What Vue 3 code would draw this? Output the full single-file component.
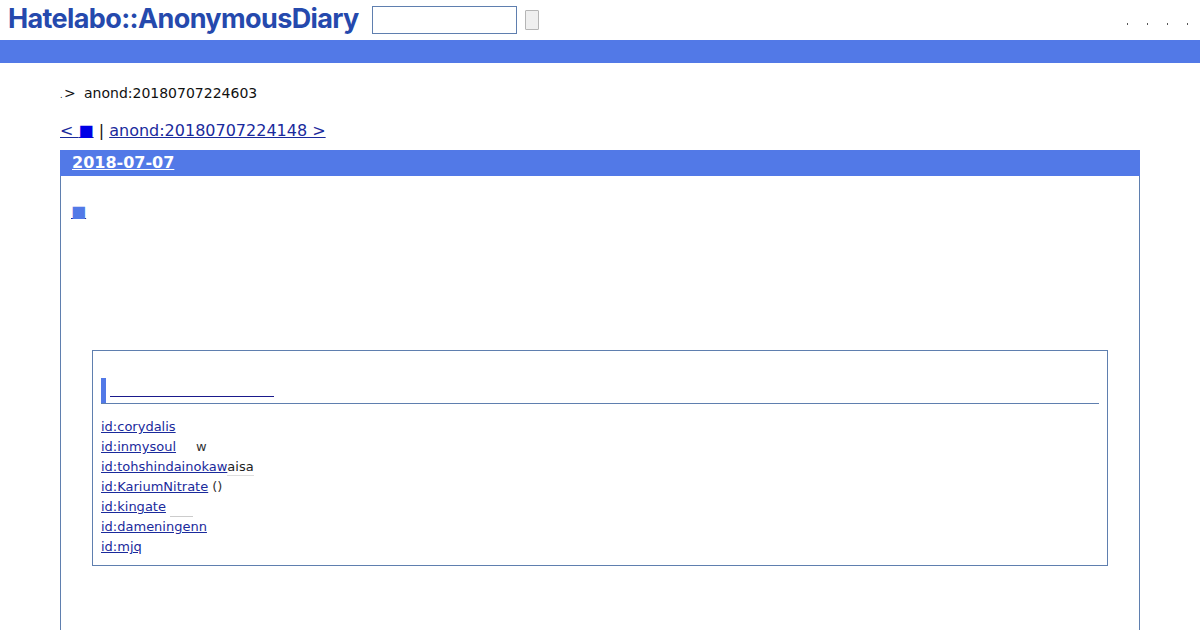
<template>
  <div class="page">
    <header class="top">
      <a class="logo">Hatelabo::AnonymousDiary</a>
      <form class="search" @submit.prevent>
        <input class="search-box" type="text" />
        <button class="search-btn" type="button"></button>
      </form>
      <ul class="top-links">
        <li v-for="n in 4" :key="n"><span class="tick"></span></li>
      </ul>
    </header>
    <div class="band"></div>

    <main class="content">
      <p class="crumb"><span class="dot">.</span><span class="gt">&gt;</span><span class="crumb-id">anond:20180707224603</span></p>
      <p class="pager"><a>&lt; <span class="sq">■</span></a> | <a>anond:20180707224148 &gt;</a></p>

      <section class="day">
        <h2 class="day-title"><a>2018-07-07</a></h2>
        <div class="day-body">
          <h3 class="entry-title"><a>■</a></h3>
          <div class="refs">
            <div class="refs-head"><i class="bar"></i><a class="refs-link"></a></div>
            <ul class="refs-list">
              <li v-for="r in refs" :key="r.id">
                <a>{{ r.id }}</a><span v-if="r.rest" class="rest" :class="r.cls">{{ r.rest }}</span>
              </li>
            </ul>
          </div>
        </div>
      </section>
    </main>
  </div>
</template>

<script setup>
const refs = [
  { id: 'id:corydalis' },
  { id: 'id:inmysoul', rest: 'w', cls: 'gap' },
  { id: 'id:tohshindainokaw', rest: 'aisa', cls: 'under' },
  { id: 'id:KariumNitrate', rest: '()', cls: 'paren' },
  { id: 'id:kingate', rest: '\u00a0', cls: 'blank' },
  { id: 'id:dameningenn' },
  { id: 'id:mjq' }
]
</script>

<style>
html, body {
  margin: 0;
  background: #fff;
  overflow: hidden;
}
</style>

<style scoped>
.page {
  font-family: "DejaVu Sans", sans-serif;
  color: #111;
  height: 630px;
  overflow: hidden;
}
a {
  color: #1a2a9c;
  text-decoration: underline;
}
.top {
  height: 40px;
  display: flex;
  align-items: center;
  padding-left: 8px;
}
.logo {
  font-family: Inter, sans-serif;
  font-weight: 700;
  font-size: 27px;
  line-height: 38px;
  margin-bottom: 2px;
  letter-spacing: -0.62px;
  color: #2549ad;
  text-decoration: none;
  width: 364px;
  white-space: nowrap;
}
.search {
  display: flex;
  align-items: center;
  gap: 8px;
}
.search-box {
  box-sizing: border-box;
  width: 145px;
  height: 28px;
  border: 1px solid #5f7faf;
  padding: 0;
  background: #fff;
}
.search-btn {
  box-sizing: border-box;
  width: 14px;
  height: 20px;
  padding: 0;
  border: 1px solid #b5b5b5;
  background: #efefef;
  border-radius: 1px;
}
.top-links {
  list-style: none;
  margin: 2px 0 0 auto;
  padding: 0 12px 0 0;
  display: flex;
  gap: 19px;
}
.top-links li {
  display: flex;
  height: 8px;
  align-items: flex-end;
}
.tick {
  display: block;
  width: 1px;
  height: 2px;
  background: #555;
}
.band {
  height: 23px;
  background: #5279e7;
}
.content {
  padding: 0 60px;
}
.crumb {
  margin: 21px 0 0;
  font-size: 14px;
  line-height: 18px;
  display: flex;
  align-items: baseline;
  color: #111;
}
.dot {
  font-size: 8px;
  width: 4px;
}
.gt {
  width: 20px;
}
.pager {
  margin: 16px 0 0;
  font-size: 16px;
  line-height: 20px;
}
.sq {
  color: #0000e6;
}
.day {
  margin-top: 9px;
  border: 1px solid #5f7faf;
  border-top: 0;
  height: 500px;
}
.day-title {
  margin: 0 -1px;
  background: #5279e7;
  height: 26px;
  line-height: 26px;
  padding-left: 12px;
  font-size: 16px;
  font-weight: 700;
}
.day-title a {
  color: #fff;
}
.day-body {
  padding: 26px 31px 0;
}
.entry-title {
  margin: 0 0 0 -22px;
  font-size: 16px;
  font-weight: 400;
  line-height: 20px;
}
.entry-title a {
  color: #5279e7;
  text-decoration-color: #1a2a9c;
  padding: 0 1px;
}
.refs {
  margin-top: 128px;
  box-sizing: border-box;
  height: 216px;
  border: 1px solid #5f7faf;
  padding: 27px 8px 0;
}
.refs-head {
  height: 25px;
  border-bottom: 1px solid #5f7faf;
  display: flex;
  align-items: flex-end;
}
.bar {
  display: block;
  width: 5px;
  height: 25px;
  background: #5279e7;
  margin-right: 4px;
}
.refs-link {
  display: block;
  width: 164px;
  height: 1px;
  background: #1a1a8c;
  margin-bottom: 6px;
}
.refs-list {
  list-style: none;
  margin: 13px 0 0;
  padding: 0;
  font-size: 13px;
  line-height: 20px;
}
.rest {
  color: #333;
}
.gap {
  margin-left: 20px;
}
.under {
  color: #222;
  border-bottom: 1px solid #ddd;
  padding-bottom: 1px;
}
.paren {
  margin-left: 4px;
}
.blank {
  display: inline-block;
  width: 23px;
  height: 15px;
  margin-left: 4px;
  border-bottom: 1px solid #ccc;
  vertical-align: bottom;
}
</style>
